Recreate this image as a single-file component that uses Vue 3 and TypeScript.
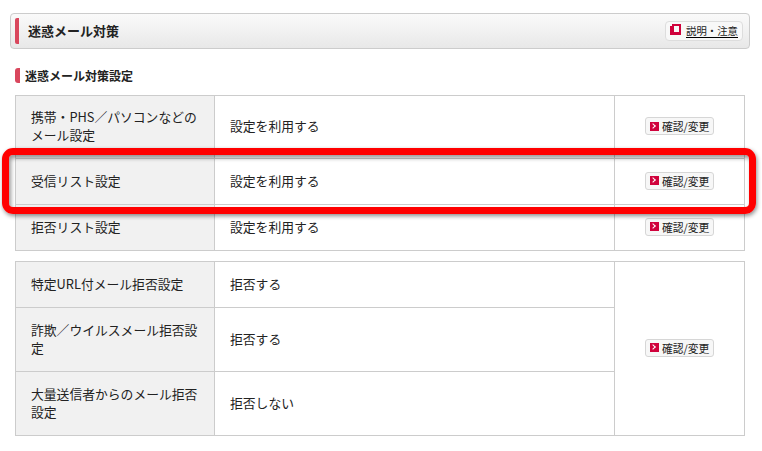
<template>
  <div class="page">
    <div class="title-box">
      <h1 class="title">迷惑メール対策</h1>
      <a class="help-link" href="#">
        <svg class="help-icon" width="11" height="11" viewBox="0 0 11 11">
          <path d="M2 0h9v11H0V2h2z M4 2v6h5V2z" fill="#d0023c" fill-rule="evenodd" />
        </svg>
        <span class="help-text">説明・注意</span>
      </a>
    </div>

    <h2 class="section-title">迷惑メール対策設定</h2>

    <table class="settings first">
      <tbody>
        <tr v-for="row in filterRows" :key="row.label" :style="{ height: row.height + 'px' }">
          <th>{{ row.label }}</th>
          <td class="value">{{ row.value }}</td>
          <td class="action">
            <button class="change-btn" type="button">
              <span class="arrow"></span>確認/変更
            </button>
          </td>
        </tr>
      </tbody>
    </table>

    <table class="settings">
      <tbody>
        <tr v-for="(row, i) in rejectRows" :key="row.label" :style="{ height: row.height + 'px' }">
          <th>{{ row.label }}</th>
          <td class="value">{{ row.value }}</td>
          <td v-if="i === 0" class="action" :rowspan="rejectRows.length">
            <button class="change-btn" type="button">
              <span class="arrow"></span>確認/変更
            </button>
          </td>
        </tr>
      </tbody>
    </table>

    <!-- red annotation drawn over the second row -->
    <div class="highlight"></div>
  </div>
</template>

<script setup lang="ts">
interface Row {
  label: string
  value: string
  height: number
}

const filterRows: Row[] = [
  { label: '携帯・PHS／パソコンなどのメール設定', value: '設定を利用する', height: 63 },
  { label: '受信リスト設定', value: '設定を利用する', height: 46 },
  { label: '拒否リスト設定', value: '設定を利用する', height: 46 },
]

const rejectRows: Row[] = [
  { label: '特定URL付メール拒否設定', value: '拒否する', height: 46 },
  { label: '詐欺／ウイルスメール拒否設定', value: '拒否する', height: 64 },
  { label: '大量送信者からのメール拒否設定', value: '拒否しない', height: 64 },
]
</script>

<style>
body {
  background: #fff;
}
</style>

<style scoped>
.page {
  position: relative;
  width: 762px;
  height: 451px;
  overflow: hidden;
  box-sizing: border-box;
  padding: 13px 17px 0 15px;
  font-family: "Noto Sans CJK JP", "Noto Sans", sans-serif;
  font-size: 13px;
  color: #333;
  background: #fff;
}

.title-box {
  display: flex;
  align-items: center;
  justify-content: space-between;
  box-sizing: border-box;
  height: 36px;
  margin: 0 -5px;
  padding: 0 6px 0 4px;
  background: linear-gradient(#fafafa, #e8e8e8);
  border: 1px solid #ccc;
  border-radius: 4px;
}

.title {
  margin: 0;
  padding-left: 9px;
  font-size: 13px;
  line-height: 26px;
  font-weight: 700;
  color: #222;
  border-left: 4px solid #d9475d;
  border-radius: 2px;
}

.help-link {
  display: flex;
  align-items: center;
  gap: 5px;
  box-sizing: border-box;
  height: 20px;
  width: 78px;
  padding: 0 4px;
  color: #222;
  text-decoration: none;
  background: #f8f8f8;
  border: 1px solid #ddd;
  border-radius: 4px;
}

.help-icon {
  flex: none;
  margin-top: -4px;
}

.help-text {
  font-size: 10.4px;
  line-height: 13px;
  white-space: nowrap;
  color: #222;
  border-bottom: 1px solid #000;
}

.section-title {
  margin: 19px 0 12px;
  padding-left: 5px;
  font-size: 12px;
  line-height: 15px;
  font-weight: 700;
  color: #222;
  border-left: 5px solid #d9475d;
  border-radius: 3px;
}

.settings {
  width: 730px;
  table-layout: fixed;
  border-collapse: collapse;
  margin-bottom: 10px;
}

.settings th,
.settings td {
  box-sizing: border-box;
  padding: 0 15px 2px;
  border: 1px solid #ccc;
  font-size: 12.8px;
  font-weight: 400;
  line-height: 18px;
  color: #222;
  text-align: left;
}

.settings th {
  width: 199px;
  padding-right: 8px;
  background: #f1f1f1;
}

.settings .action {
  width: 130px;
  padding: 0 0 2px;
  text-align: center;
}

.change-btn {
  display: inline-flex;
  align-items: center;
  gap: 3px;
  box-sizing: border-box;
  height: 18px;
  width: 69px;
  padding: 0 4px;
  font-family: inherit;
  font-size: 10.8px;
  line-height: 16px;
  white-space: nowrap;
  color: #222;
  background: #f7f7f7;
  border: 1px solid #d6d6d6;
  border-radius: 3px;
}

.arrow {
  position: relative;
  flex: none;
  width: 9px;
  height: 9px;
  background: #d0023c;
}

.arrow::after {
  content: "";
  position: absolute;
  top: 2px;
  left: 1px;
  width: 3px;
  height: 3px;
  border-top: 1px solid #fff;
  border-right: 1px solid #fff;
  transform: rotate(45deg);
}

.highlight {
  position: absolute;
  left: 2px;
  top: 148px;
  width: 754px;
  height: 66px;
  box-sizing: border-box;
  border: 7px solid #f00;
  border-radius: 11px;
  box-shadow: 1px 2px 4px rgba(0, 0, 0, 0.45), inset 2px 3px 4px rgba(0, 0, 0, 0.4);
}
</style>
